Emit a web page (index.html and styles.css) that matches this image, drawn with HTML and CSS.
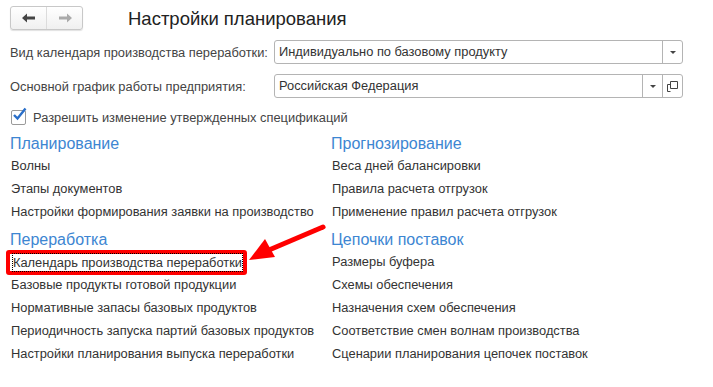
FILE: index.html
```html
<!DOCTYPE html>
<html lang="ru">
<head>
    <meta charset="UTF-8">
    <title>Настройки планирования</title>
    <link rel="stylesheet" href="styles.css">
</head>
<body>

<div class="page">
    <div class="header">
        <div class="nav">
            <span class="nav-btn">
                <svg width="14" height="10" viewBox="0 0 14 10"><path d="M0 5L5 0.5V3.5H13V6.5H5V9.5Z" fill="#444"/></svg>
            </span>
            <span class="nav-btn">
                <svg width="14" height="10" viewBox="0 0 14 10"><path d="M14 5L9 0.5V3.5H1V6.5H9V9.5Z" fill="#aaa"/></svg>
            </span>
        </div>
        <div class="title">Настройки планирования</div>
    </div>

    <div class="form">
        <div class="form-label">Вид календаря производства переработки:</div>
        <div class="field">
            <span class="field-value">Индивидуально по базовому продукту</span>
            <span class="field-btn"><span class="tri"></span></span>
        </div>

        <div class="form-label">Основной график работы предприятия:</div>
        <div class="field">
            <span class="field-value">Российская Федерация</span>
            <span class="field-btn"><span class="tri"></span></span>
            <span class="field-btn">
                <svg width="11" height="11" viewBox="0 0 11 11"><path d="M3.5 0.5H10.5V7.5H3.5Z M0.5 3.5V10.5H3.5 M0.5 3.5H3.5" fill="none" stroke="#444"/></svg>
            </span>
        </div>
    </div>

    <div class="check-row">
        <span class="checkbox">
            <svg width="16" height="16" viewBox="0 0 16 16"><path d="M3 8L6.5 11.5L14.5 1.5" fill="none" stroke="#2a6fc9" stroke-width="2.4"/></svg>
        </span>
        Разрешить изменение утвержденных спецификаций
    </div>

    <div class="sections">
        <div class="column">
            <div class="section-title">Планирование</div>
            <div class="item">Волны</div>
            <div class="item">Этапы документов</div>
            <div class="item">Настройки формирования заявки на производство</div>

            <div class="section-title">Переработка</div>
            <div class="item"><span class="marked"><span class="focused">Календарь производства переработки</span></span></div>
            <div class="item">Базовые продукты готовой продукции</div>
            <div class="item">Нормативные запасы базовых продуктов</div>
            <div class="item">Периодичность запуска партий базовых продуктов</div>
            <div class="item">Настройки планирования выпуска переработки</div>
        </div>
        <div class="column">
            <div class="section-title">Прогнозирование</div>
            <div class="item">Веса дней балансировки</div>
            <div class="item">Правила расчета отгрузок</div>
            <div class="item">Применение правил расчета отгрузок</div>

            <div class="section-title">Цепочки поставок</div>
            <div class="item">Размеры буфера</div>
            <div class="item">Схемы обеспечения</div>
            <div class="item">Назначения схем обеспечения</div>
            <div class="item">Соответствие смен волнам производства</div>
            <div class="item">Сценарии планирования цепочек поставок</div>
        </div>
    </div>

    <!-- стрелка-указатель поверх формы -->
    <svg class="pointer" width="80" height="40" viewBox="0 0 80 40">
        <path d="M76 3L22 26" stroke="#f00" stroke-width="5" stroke-linecap="round"/>
        <path d="M2 36L18 15L28 33Z" fill="#f00"/>
    </svg>
</div>

</body>
</html>
```

FILE: styles.css
```css
* {
    box-sizing: border-box;
    margin: 0;
    padding: 0;
}

body {
    background-color: #FFFFFF;
    font-family: 'Liberation Sans', Arial, sans-serif;
    font-size: 12.85px;
    color: #333;
}

.page {
    position: relative;
    width: 713px;
    height: 387px;
    padding: 6px 10px 0 10px;
}

.header {
    display: flex;
    align-items: center;
    gap: 45px;
    height: 24px;
}

.nav {
    display: flex;
    width: 73px;
    height: 24px;
    border: 1px solid #c8c8c8;
    border-radius: 3px;
    background: linear-gradient(#ffffff, #f0f0f0);
    box-shadow: 0 1px 1px rgba(0, 0, 0, 0.12);
}

.nav-btn {
    flex: 1;
    display: flex;
    justify-content: center;
    align-items: center;
}

.nav-btn + .nav-btn {
    border-left: 1px solid #dcdcdc;
}

.title {
    font-size: 18.5px;
    color: #222;
    padding-top: 2px;
}

.form {
    display: grid;
    grid-template-columns: 264px 409px;
    row-gap: 10px;
    align-items: center;
    margin-top: 10px;
}

.form-label {
    color: #444;
}

.field {
    display: flex;
    height: 24px;
    border: 1px solid #b4b4b4;
    border-radius: 3px;
}

.field-value {
    flex: 1;
    padding: 3px 4px;
    color: #333;
}

.field-btn {
    width: 20px;
    border-left: 1px solid #b4b4b4;
    display: flex;
    justify-content: center;
    align-items: center;
}

.tri {
    width: 0;
    height: 0;
    border-left: 3px solid transparent;
    border-right: 3px solid transparent;
    border-top: 3px solid #444;
}

.check-row {
    display: flex;
    align-items: center;
    gap: 7px;
    margin-top: 10px;
    height: 18px;
    color: #444;
}

.checkbox {
    position: relative;
    width: 15px;
    height: 15px;
    border: 1px solid #9a9a9a;
    border-radius: 2px;
    margin-left: 1px;
}

.checkbox svg {
    position: absolute;
    left: -1px;
    top: -4px;
}

.sections {
    display: grid;
    grid-template-columns: 321px 1fr;
    margin-top: 1px;
}

.section-title {
    font-size: 16px;
    color: #3d86d2;
    padding-top: 7px;
    height: 27px;
    line-height: 20px;
}

.item {
    height: 23px;
    line-height: 23px;
    padding-left: 1px;
}

.marked {
    display: inline-block;
    margin-left: -5px;
    padding: 0 1px 0 3px;
    border: 4px solid #f00;
    border-radius: 3px;
    line-height: 17px;
}

.focused {
    display: inline-block;
    outline: 1px dotted #000;
    line-height: 17px;
}

.pointer {
    position: absolute;
    left: 247px;
    top: 224px;
}
```
